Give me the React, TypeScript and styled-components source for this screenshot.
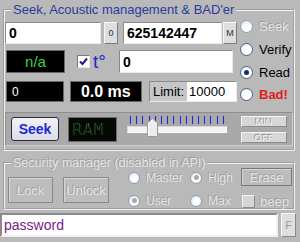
import React from 'react'
import styled, { createGlobalStyle, css } from 'styled-components'

const GlobalStyle = createGlobalStyle`
  html, body {
    margin: 0;
    padding: 0;
    background: #b9b9b9;
  }
  body {
    font-family: 'Liberation Sans', Arial, sans-serif;
    font-size: 13px;
  }
`

const disabledText = css`
  color: #e4e4e4;
  text-shadow: -1px -1px 0 #9c9c9c;
`

const Window = styled.div`
  width: 300px;
  height: 242px;
  overflow: hidden;
  background: #b9b9b9;
  padding-top: 2px;
  box-sizing: border-box;
`

const Group = styled.fieldset`
  margin: 0 5px 0 3px;
  padding: 0 0 3px 0;
  border: 2px groove #f2f2f2;
  min-width: 0;
`

const Legend = styled.legend<{ $disabled?: boolean }>`
  margin-left: 6px;
  padding: 0 2px;
  font-size: 13px;
  line-height: 16px;
  color: #2c3a9c;
  ${({ $disabled }) =>
    $disabled &&
    css`
      font-size: 12.5px;
      line-height: 12px;
      ${disabledText}
    `}
`

const Top = styled.div`
  display: flex;
  gap: 3px;
`

const Fields = styled.div`
  width: 232px;
  display: flex;
  flex-direction: column;
  padding-top: 4px;
`

const Row = styled.div<{ $h: number; $mt?: number }>`
  display: flex;
  align-items: center;
  height: ${({ $h }) => $h}px;
  margin-top: ${({ $mt }) => $mt || 0}px;
`

const Field = styled.div<{ $w: number; $bold?: boolean; $ml?: number }>`
  box-sizing: border-box;
  width: ${({ $w }) => $w}px;
  height: 100%;
  margin-left: ${({ $ml }) => $ml || 0}px;
  background: #ffffff;
  border: 1px solid;
  border-color: #8a8a8a #ececec #ececec #8a8a8a;
  padding-left: 3px;
  display: flex;
  align-items: center;
  font-size: ${({ $bold }) => ($bold ? 14 : 13)}px;
  font-weight: ${({ $bold }) => ($bold ? 700 : 400)};
  color: #000;
`

const SmallBtn = styled.div<{ $ml?: number }>`
  box-sizing: border-box;
  width: 14px;
  height: 100%;
  margin-left: ${({ $ml }) => $ml || 0}px;
  background: #dedede;
  border: 1px solid;
  border-color: #f8f8f8 #7c7c7c #7c7c7c #f8f8f8;
  display: flex;
  align-items: center;
  justify-content: center;
  font-size: 9px;
  color: #333;
`

const Led = styled.div<{ $w: number; $ml?: number; $tone: 'green' | 'plain' | 'big' }>`
  box-sizing: border-box;
  width: ${({ $w }) => $w}px;
  height: 100%;
  margin-left: ${({ $ml }) => $ml || 0}px;
  background: #000;
  border: 1px solid #6a6a6a;
  display: flex;
  align-items: center;
  ${({ $tone }) =>
    $tone === 'green'
      ? css`
          justify-content: center;
          color: #3ed23e;
          font-size: 15px;
        `
      : $tone === 'big'
      ? css`
          justify-content: center;
          color: #fff;
          font-size: 16px;
          font-weight: 700;
        `
      : css`
          padding-left: 5px;
          color: #fff;
          font-size: 12px;
        `}
`

const Check = styled.div<{ $disabled?: boolean }>`
  box-sizing: border-box;
  width: 13px;
  height: 13px;
  background: ${({ $disabled }) => ($disabled ? '#d6d6d6' : '#fff')};
  border: 1px solid;
  border-color: ${({ $disabled }) =>
    $disabled ? '#f2f2f2 #8c8c8c #8c8c8c #f2f2f2' : '#7a7a7a #e8e8e8 #e8e8e8 #7a7a7a'};
  display: flex;
  align-items: center;
  justify-content: center;
`

const Temp = styled.span`
  margin-left: 3px;
  font-size: 19px;
  line-height: 20px;
  color: #2424d0;
`

const LimitBox = styled.div`
  margin-left: 7px;
  display: flex;
  height: 100%;
  border: 1px solid;
  border-color: #8a8a8a #ececec #ececec #8a8a8a;
  box-sizing: border-box;
`

const LimitLabel = styled.div`
  width: 37px;
  display: flex;
  align-items: center;
  justify-content: center;
  background: #c6c6c6;
  color: #000;
  font-size: 13px;
`

const LimitValue = styled.div`
  width: 47px;
  background: #fff;
  display: flex;
  align-items: center;
  padding-left: 2px;
  font-size: 13px;
`

const Radios = styled.div`
  display: flex;
  flex-direction: column;
  margin-top: -3px;
  margin-bottom: -3px;
`

const RadioItem = styled.div<{ $h?: number }>`
  display: flex;
  align-items: center;
  gap: 6px;
  height: ${({ $h }) => $h || 22}px;
`

const RadioCircle = styled.span<{ $size: number; $disabled?: boolean }>`
  box-sizing: border-box;
  width: ${({ $size }) => $size}px;
  height: ${({ $size }) => $size}px;
  border-radius: 50%;
  border: 1px solid ${({ $disabled }) => ($disabled ? '#8aa0b8' : '#4a6484')};
  background: ${({ $disabled }) =>
    $disabled
      ? 'radial-gradient(circle at 60% 60%, #ffffff 30%, #dce4ee 90%)'
      : 'radial-gradient(circle at 60% 60%, #ffffff 40%, #e2e6ec 95%)'};
  display: flex;
  align-items: center;
  justify-content: center;
  flex-shrink: 0;
`

const RadioDot = styled.span<{ $disabled?: boolean }>`
  width: 5px;
  height: 5px;
  border-radius: 50%;
  background: ${({ $disabled }) => ($disabled ? '#a8a8a8' : '#1a2a7a')};
`

const RadioLabel = styled.span<{ $tone?: 'disabled' | 'bad'; $small?: boolean }>`
  font-size: ${({ $small }) => ($small ? 12 : 13)}px;
  line-height: ${({ $small }) => ($small ? 12 : 13)}px;
  color: #000;
  white-space: nowrap;
  ${({ $tone }) => $tone === 'disabled' && disabledText}
  ${({ $tone }) =>
    $tone === 'bad' &&
    css`
      color: #e02020;
      font-weight: 700;
    `}
`

const Panel = styled.div`
  margin-top: 10px;
  height: 34px;
  box-sizing: border-box;
  background: #a9a9a9;
  border: 1px solid;
  border-color: #8e8e8e #cfcfcf #cfcfcf #8e8e8e;
  display: flex;
  align-items: center;
`

const SeekButton = styled.div`
  box-sizing: border-box;
  margin-left: 5px;
  width: 48px;
  height: 24px;
  border: 1px solid #2a2a3a;
  border-radius: 3px;
  background: linear-gradient(#f2f2f8, #dcdce6);
  display: flex;
  align-items: center;
  justify-content: center;
  color: #1c2ad0;
  font-weight: 700;
  font-size: 14px;
`

const Matrix = styled.div`
  box-sizing: border-box;
  margin-left: 9px;
  width: 49px;
  height: 25px;
  background: #050805;
  border: 1px solid #6a6a6a;
  display: flex;
  align-items: center;
  padding-left: 3px;
`

const MatrixText = styled.span`
  font-family: 'DejaVu Sans Mono', 'Liberation Mono', monospace;
  font-size: 16px;
  transform: scaleX(1.1);
  transform-origin: left center;
  color: transparent;
  background-image: radial-gradient(circle, #2e6e2e 0.7px, transparent 0.9px);
  background-size: 2px 2px;
  -webkit-background-clip: text;
  background-clip: text;
`

const Slider = styled.div`
  margin-left: 10px;
  width: 100px;
  height: 26px;
  position: relative;
  display: flex;
  flex-direction: column;
`

const Ticks = styled.div`
  display: flex;
  justify-content: space-between;
  padding: 0 3px 0 3px;
  height: 8px;
`

const Tick = styled.span`
  width: 1px;
  height: 8px;
  background: #2626e0;
  box-shadow: 0 0 1px #7a7aff;
`

const Track = styled.div`
  margin-top: 2px;
  height: 5px;
  background: #f2f2f2;
  border: 1px solid;
  border-color: #d8d8d8 #ffffff #ffffff #d8d8d8;
`

const Thumb = styled.svg`
  position: absolute;
  left: 20px;
  top: 2px;
`

const SideButtons = styled.div`
  margin-left: auto;
  margin-right: 5px;
  display: flex;
  flex-direction: column;
  gap: 5px;
`

const TinyButton = styled.div`
  box-sizing: border-box;
  width: 46px;
  height: 11px;
  background: #d6d6d6;
  border: 1px solid;
  border-color: #f4f4f4 #8c8c8c #8c8c8c #f4f4f4;
  text-align: center;
  font-size: 9.5px;
  line-height: 9px;
  color: #f0f0f0;
  text-shadow: -1px -1px 0 #8e8e8e;
`

const SecGroup = styled(Group)`
  margin-top: 6px;
  padding-bottom: 2px;
`

const SecBody = styled.div`
  display: flex;
  align-items: flex-start;
  height: 38px;
  margin-top: -1px;
`

const BigButton = styled.div<{ $w: number; $ml: number }>`
  box-sizing: border-box;
  margin-top: 9px;
  margin-left: ${({ $ml }) => $ml}px;
  width: ${({ $w }) => $w}px;
  height: 26px;
  border: 1px solid #8a8a8a;
  box-shadow: inset 1px 1px 0 #d6d6d6;
  background: #bdbdbd;
  display: flex;
  align-items: center;
  justify-content: center;
  font-size: 13px;
  ${disabledText}
`

const RadioGrid = styled.div`
  margin-left: 19px;
  margin-top: -2px;
  display: grid;
  grid-template-columns: 62px 46px;
  grid-auto-rows: 23px;
`

const SideCol = styled.div`
  margin-left: 5px;
  display: flex;
  flex-direction: column;
  gap: 8px;
`

const EraseButton = styled.div`
  box-sizing: border-box;
  width: 51px;
  height: 18px;
  border: 1px solid #7a7a7a;
  background: #bcbcbc;
  box-shadow: inset 1px 1px 0 #d4d4d4;
  display: flex;
  align-items: center;
  justify-content: center;
  font-size: 13px;
  ${disabledText}
`

const BeepRow = styled.div`
  display: flex;
  align-items: center;
  gap: 5px;
  padding-left: 1px;
  font-size: 13px;
  ${disabledText}
`

const PasswordRow = styled.div`
  display: flex;
  margin-top: 3px;
  height: 24px;
  gap: 3px;
`

const Password = styled.div`
  box-sizing: border-box;
  width: 278px;
  background: #fff;
  border: 2px solid;
  border-color: #8a8a8a #f0f0f0 #f0f0f0 #8a8a8a;
  display: flex;
  align-items: center;
  padding-left: 2px;
  color: #7a1a8a;
  font-size: 14px;
`

const FButton = styled.div`
  box-sizing: border-box;
  width: 15px;
  background: #dedede;
  border: 1px solid;
  border-color: #f8f8f8 #8a8a8a #8a8a8a #f8f8f8;
  display: flex;
  align-items: center;
  justify-content: center;
  font-size: 11px;
  color: #9a9a9a;
`

type RadioProps = {
  label: string
  checked?: boolean
  size?: number
  tone?: 'disabled' | 'bad'
  h?: number
  small?: boolean
}

const Radio: React.FC<RadioProps> = ({ label, checked, size = 13, tone, h, small }) => {
  const dis = tone === 'disabled'
  return (
    <RadioItem $h={h}>
      <RadioCircle $size={size} $disabled={dis}>
        {checked && <RadioDot $disabled={dis} />}
      </RadioCircle>
      <RadioLabel $tone={tone} $small={small}>
        {label}
      </RadioLabel>
    </RadioItem>
  )
}

const App: React.FC = () => {
  return (
    <>
      <GlobalStyle />
      <Window>
        <Group>
          <Legend>Seek, Acoustic management &amp; BAD'er</Legend>
          <Top>
            <Fields>
              <Row $h={22}>
                <Field $w={96} $bold>0</Field>
                <SmallBtn $ml={3}>0</SmallBtn>
                <Field $w={99} $ml={5} $bold>625142447</Field>
                <SmallBtn $ml={1}>M</SmallBtn>
              </Row>
              <Row $h={23} $mt={6}>
                <Led $w={59} $ml={1} $tone="green">n/a</Led>
                <Check style={{ marginLeft: 12 }}>
                  <svg width="9" height="9" viewBox="0 0 9 9">
                    <path d="M1 4.5 L3.5 7 L8 1.5" stroke="#1a1a80" strokeWidth="2" fill="none" />
                  </svg>
                </Check>
                <Temp>t°</Temp>
                <Field $w={114} $ml={13} $bold>0</Field>
              </Row>
              <Row $h={21} $mt={8}>
                <Led $w={58} $ml={1} $tone="plain">0</Led>
                <Led $w={73} $ml={6} $tone="big">0.0 ms</Led>
                <LimitBox>
                  <LimitLabel>Limit:</LimitLabel>
                  <LimitValue>10000</LimitValue>
                </LimitBox>
              </Row>
            </Fields>
            <Radios>
              <Radio label="Seek" tone="disabled" h={23} />
              <Radio label="Verify" h={23} />
              <Radio label="Read" checked h={22} />
              <Radio label="Bad!" tone="bad" h={22} />
            </Radios>
          </Top>
          <Panel>
            <SeekButton>Seek</SeekButton>
            <Matrix>
              <MatrixText>RAM</MatrixText>
            </Matrix>
            <Slider>
              <Ticks>
                {Array.from({ length: 16 }).map((_, i) => (
                  <Tick key={i} />
                ))}
              </Ticks>
              <Track />
              <Thumb width="11" height="19" viewBox="0 0 11 19">
                <path d="M0.5 18.5 V5 L5.5 0.5 L10.5 5 V18.5 Z" fill="#ececec" stroke="#9a9a9a" />
                <path d="M1.5 17.5 V5.4 L5.5 1.8" stroke="#ffffff" fill="none" />
              </Thumb>
            </Slider>
            <SideButtons>
              <TinyButton>MIN</TinyButton>
              <TinyButton>OFF</TinyButton>
            </SideButtons>
          </Panel>
        </Group>
        <SecGroup>
          <Legend $disabled>Security manager (disabled in API)</Legend>
          <SecBody>
            <BigButton $w={45} $ml={3}>Lock</BigButton>
            <BigButton $w={46} $ml={10}>Unlock</BigButton>
            <RadioGrid>
              <Radio label="Master" tone="disabled" size={12} h={23} small />
              <Radio label="High" tone="disabled" size={12} checked h={23} small />
              <Radio label="User" tone="disabled" size={12} checked h={23} small />
              <Radio label="Max" tone="disabled" size={12} h={23} small />
            </RadioGrid>
            <SideCol>
              <EraseButton>Erase</EraseButton>
              <BeepRow>
                <Check $disabled />
                beep
              </BeepRow>
            </SideCol>
          </SecBody>
        </SecGroup>
        <PasswordRow>
          <Password>password</Password>
          <FButton>F</FButton>
        </PasswordRow>
      </Window>
    </>
  )
}

export default App
